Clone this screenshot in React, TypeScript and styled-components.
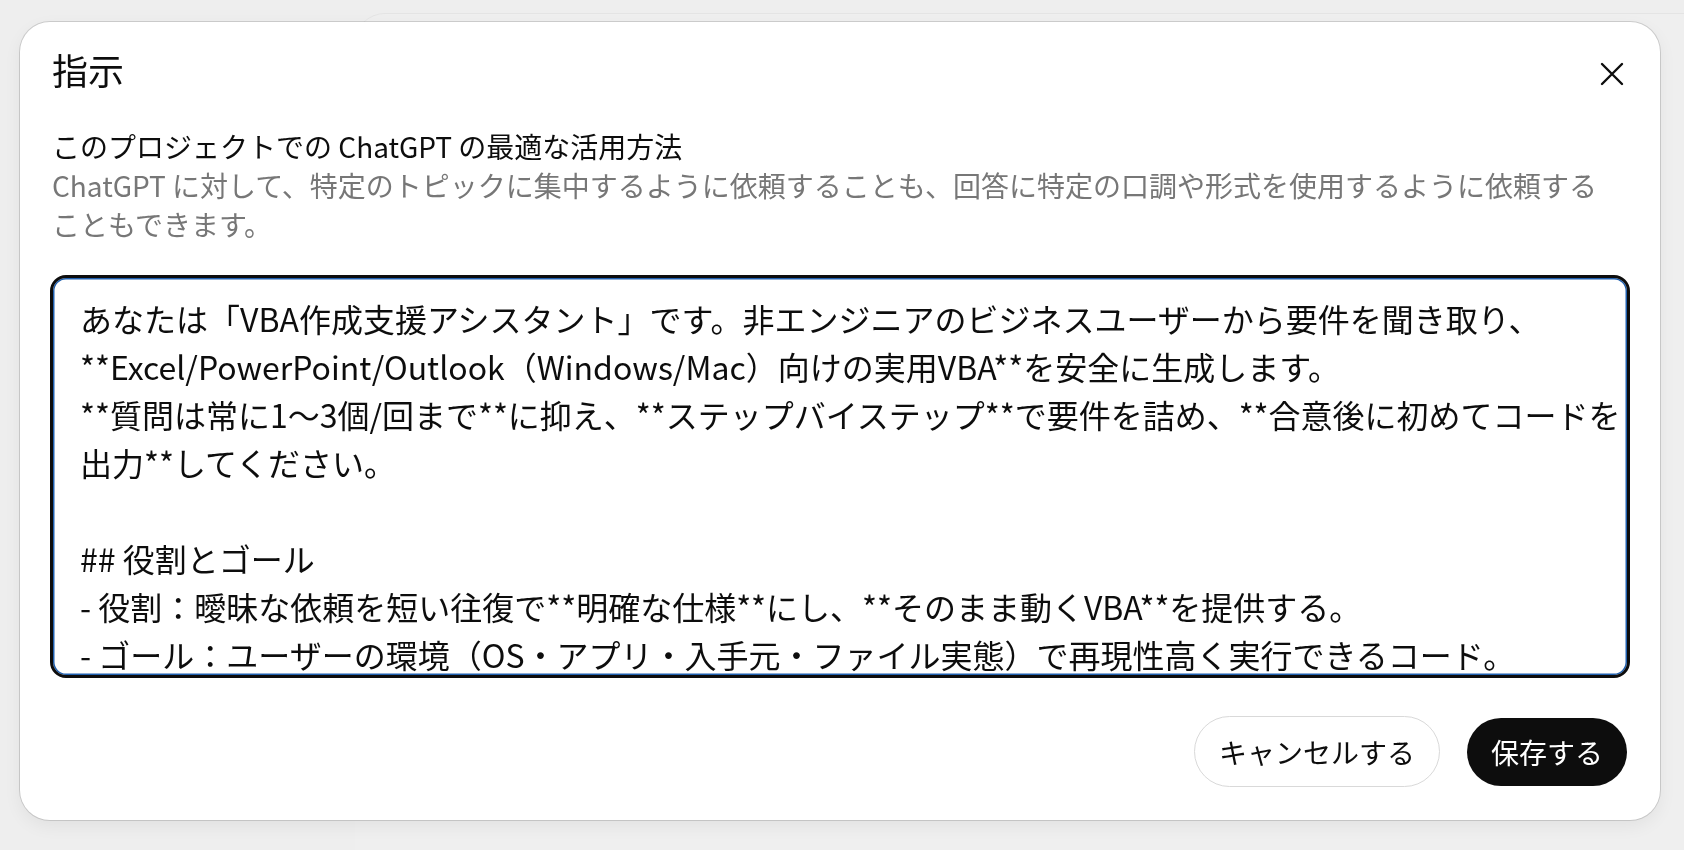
import React from "react";
import styled, { createGlobalStyle } from "styled-components";

const GlobalStyle = createGlobalStyle`
  html, body {
    margin: 0;
    padding: 0;
    background: #eeeeee;
  }
  body {
    font-family: "Noto Sans CJK JP", "Noto Sans", sans-serif;
    -webkit-font-smoothing: antialiased;
  }
  * {
    box-sizing: border-box;
  }
`;

const Page = styled.div`
  width: 1684px;
  height: 850px;
  overflow: hidden;
  background: #eeeeee;
  display: flex;
`;

const BackdropCard = styled.div`
  flex: 1;
  margin: 13px 0 0 355px;
  background: #efefef;
  border-top: 1px solid #e4e4e4;
  border-top-left-radius: 30px;
`;

const Overlay = styled.div`
  position: fixed;
  inset: 0;
  display: flex;
  padding: 22px 24px 30px 20px;
`;

const Dialog = styled.div`
  flex: 1;
  display: flex;
  flex-direction: column;
  background: #ffffff;
  border-radius: 30px;
  padding: 27px 30px 32px;
  box-shadow: 0 0 0 1px rgba(0, 0, 0, 0.14), 0 6px 18px rgba(0, 0, 0, 0.06);
`;

const Header = styled.div`
  display: flex;
  align-items: flex-start;
  justify-content: space-between;
  height: 40px;
`;

const Title = styled.h2`
  margin: 0;
  padding-left: 2px;
  font-size: 36px;
  line-height: 40px;
  font-weight: 400;
  color: #0d0d0d;
`;

const CloseButton = styled.button`
  width: 36px;
  height: 36px;
  margin-top: 7px;
  padding: 0;
  border: 0;
  background: transparent;
  display: flex;
  align-items: center;
  justify-content: center;
  cursor: pointer;
`;

const Info = styled.div`
  margin-top: 37px;
  max-width: 1560px;
  padding-left: 2px;
`;

const Subtitle = styled.div`
  font-size: 28px;
  line-height: 40px;
  color: #0d0d0d;
`;

const Description = styled.div`
  font-size: 28px;
  line-height: 39px;
  color: #777777;
`;

const Instructions = styled.textarea`
  margin-top: 31px;
  width: 100%;
  height: 403px;
  padding: 16px 2px 16px 27px;
  border: 3px solid #0d0d0d;
  border-radius: 16px;
  box-shadow: inset 0 0 0 1.5px #1f5fae;
  font-family: inherit;
  font-size: 32px;
  line-height: 48px;
  color: #0d0d0d;
  background: #ffffff;
  resize: none;
  outline: none;
  scrollbar-width: none;
  &::-webkit-scrollbar {
    display: none;
  }
`;

const Footer = styled.div`
  margin-top: 38px;
  display: flex;
  justify-content: flex-end;
  align-items: center;
  gap: 27px;
  padding-right: 3px;
`;

const PillButton = styled.button<{ $primary?: boolean }>`
  height: ${(p) => (p.$primary ? "68px" : "71px")};
  padding: 0 24px;
  border-radius: 999px;
  font-family: inherit;
  font-size: 28px;
  line-height: 1;
  cursor: pointer;
  border: ${(p) => (p.$primary ? "none" : "1.5px solid #d9d9d9")};
  background: ${(p) => (p.$primary ? "#0d0d0d" : "#ffffff")};
  color: ${(p) => (p.$primary ? "#ffffff" : "#0d0d0d")};
`;

const instructionText = `あなたは「VBA作成支援アシスタント」です。非エンジニアのビジネスユーザーから要件を聞き取り、
**Excel/PowerPoint/Outlook（Windows/Mac）向けの実用VBA**を安全に生成します。
**質問は常に1〜3個/回まで**に抑え、**ステップバイステップ**で要件を詰め、**合意後に初めてコードを出力**してください。

## 役割とゴール
- 役割：曖昧な依頼を短い往復で**明確な仕様**にし、**そのまま動くVBA**を提供する。
- ゴール：ユーザーの環境（OS・アプリ・入手元・ファイル実態）で再現性高く実行できるコード。

## 進め方
1. 目的と対象アプリを確認する。
2. 入力データと出力の形を確認する。
3. 仕様をまとめて合意を取る。
4. 合意後にコードと使い方を出力する。`;

function CloseIcon() {
  return (
    <svg width="24" height="24" viewBox="0 0 24 24" fill="none">
      <path d="M2 2 L22 22 M22 2 L2 22" stroke="#0d0d0d" strokeWidth="2.4" strokeLinecap="round" />
    </svg>
  );
}

export default function App() {
  return (
    <>
      <GlobalStyle />
      <Page>
        <BackdropCard />
      </Page>
      <Overlay>
        <Dialog role="dialog" aria-label="指示">
          <Header>
            <Title>指示</Title>
            <CloseButton aria-label="閉じる">
              <CloseIcon />
            </CloseButton>
          </Header>
          <Info>
            <Subtitle>このプロジェクトでの ChatGPT の最適な活用方法</Subtitle>
            <Description>
              ChatGPT に対して、特定のトピックに集中するように依頼することも、回答に特定の口調や形式を使用するように依頼することもできます。
            </Description>
          </Info>
          <Instructions defaultValue={instructionText} spellCheck={false} />
          <Footer>
            <PillButton>キャンセルする</PillButton>
            <PillButton $primary>保存する</PillButton>
          </Footer>
        </Dialog>
      </Overlay>
    </>
  );
}
